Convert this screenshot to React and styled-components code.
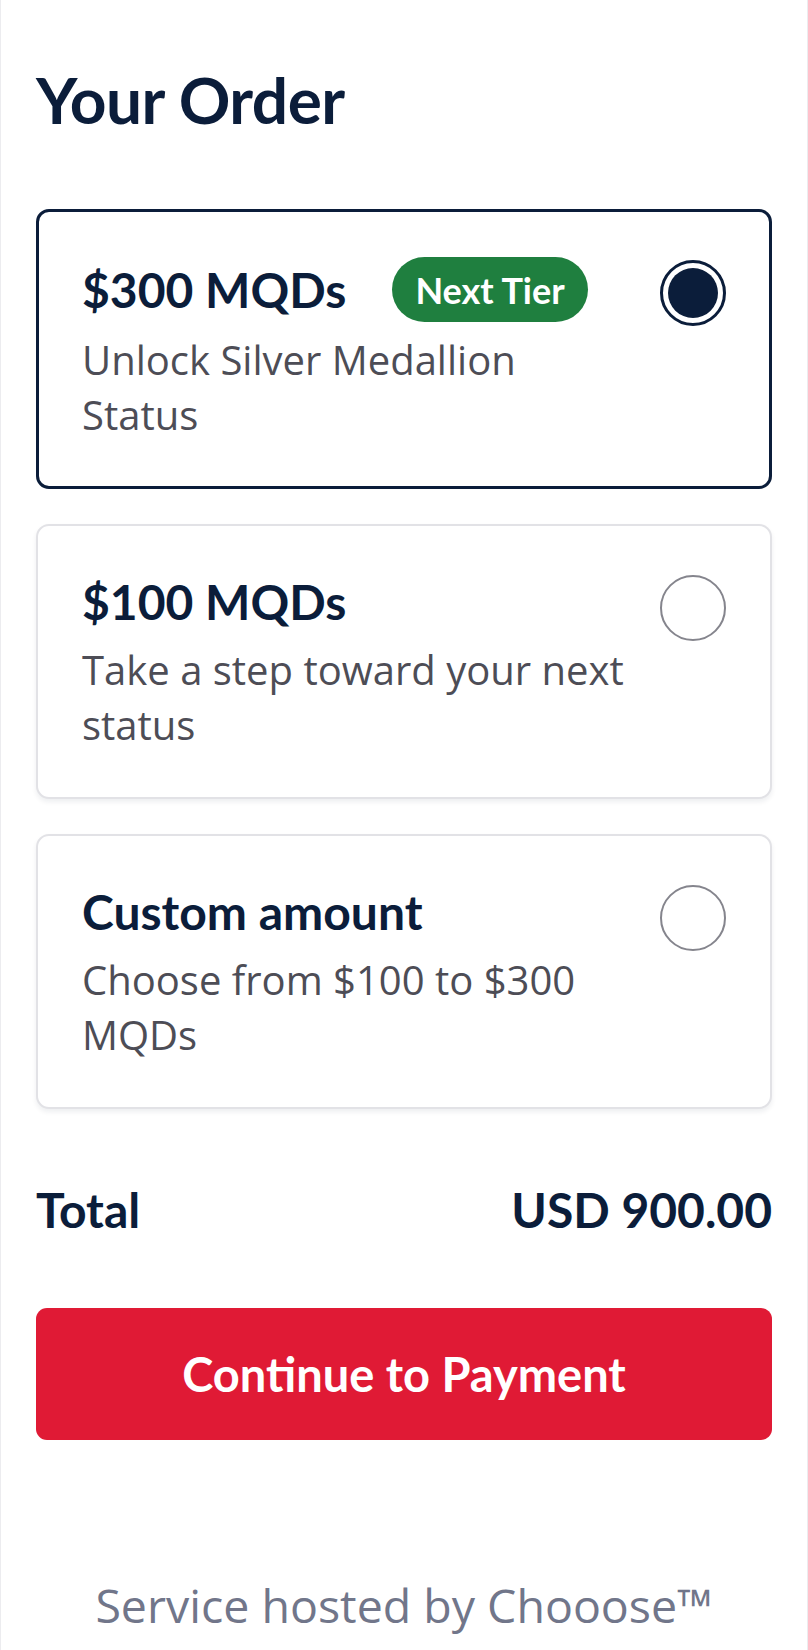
import React, { useState } from "react";
import styled, { createGlobalStyle } from "styled-components";

const GlobalStyle = createGlobalStyle`
  html, body {
    margin: 0;
    padding: 0;
    background: #ffffff;
  }
  * {
    box-sizing: border-box;
  }
`;

const Page = styled.div`
  width: 808px;
  min-height: 1650px;
  padding: 61px 35px 0;
  border-left: 1px solid #ececef;
  border-right: 1px solid #ececef;
  background: #ffffff;
  font-family: Lato, "Open Sans", sans-serif;
  color: #0b1d3a;
`;

const Heading = styled.h1`
  margin: 0 0 71px;
  font-size: 64px;
  line-height: 77px;
  font-weight: 700;
  letter-spacing: -0.5px;
`;

const OptionList = styled.div`
  display: flex;
  flex-direction: column;
  gap: 35px;
`;

const OptionCard = styled.div`
  display: flex;
  align-items: flex-start;
  gap: 32px;
  padding: ${(p) => (p.$selected ? "45px 43px 44px" : "46px 44px 45px")};
  border: ${(p) => (p.$selected ? "3px solid #0b1d3a" : "2px solid #e2e2e6")};
  border-radius: 13px;
  background: #ffffff;
  box-shadow: ${(p) =>
    p.$selected ? "none" : "0 3px 5px rgba(20, 30, 60, 0.07)"};
  cursor: pointer;
`;

const OptionText = styled.div`
  flex: 1;
  min-width: 0;
`;

const TitleRow = styled.div`
  display: flex;
  align-items: center;
  gap: 46px;
`;

const Title = styled.div`
  font-size: 48px;
  line-height: 60px;
  font-weight: 700;
  color: #0b1d3a;
`;

const Badge = styled.span`
  display: inline-flex;
  align-items: center;
  height: 65px;
  padding: 0 23px;
  border-radius: 33px;
  background: #1f7f3f;
  color: #ffffff;
  font-size: 36px;
  font-weight: 700;
`;

const Description = styled.p`
  margin: 10px 0 0;
  font-family: "Open Sans", sans-serif;
  font-size: 40px;
  line-height: 55px;
  font-weight: 400;
  color: #4d4d56;
`;

const Radio = styled.span`
  flex-shrink: 0;
  width: 66px;
  height: 66px;
  margin-top: 3px;
  border-radius: 50%;
  border: ${(p) => (p.$checked ? "3px solid #0b1d3a" : "2px solid #85858d")};
  background: #ffffff;
  display: flex;
  align-items: center;
  justify-content: center;

  &::after {
    content: "";
    display: ${(p) => (p.$checked ? "block" : "none")};
    width: 50px;
    height: 50px;
    border-radius: 50%;
    background: #0b1d3a;
  }
`;

const TotalRow = styled.div`
  display: flex;
  justify-content: space-between;
  align-items: baseline;
  margin-top: 72px;
  font-size: 48px;
  line-height: 58px;
  font-weight: 700;
  color: #0b1d3a;
`;

const PayButton = styled.button`
  display: block;
  width: 100%;
  height: 132px;
  margin-top: 69px;
  border: none;
  border-radius: 11px;
  background: #e01a35;
  color: #ffffff;
  font-family: Lato, "Open Sans", sans-serif;
  font-size: 47px;
  font-weight: 700;
  cursor: pointer;
`;

const Footer = styled.p`
  margin: 134px 0 0;
  text-align: center;
  font-family: "Open Sans", sans-serif;
  font-size: 46.5px;
  line-height: 62px;
  color: #71768a;
`;

const options = [
  {
    id: "300",
    title: "$300 MQDs",
    badge: "Next Tier",
    description: "Unlock Silver Medallion Status",
  },
  {
    id: "100",
    title: "$100 MQDs",
    description: "Take a step toward your next status",
  },
  {
    id: "custom",
    title: "Custom amount",
    description: "Choose from $100 to $300 MQDs",
  },
];

const App = () => {
  const [selected, setSelected] = useState("300");

  return (
    <>
      <GlobalStyle />
      <Page>
        <Heading>Your Order</Heading>
        <OptionList>
          {options.map((opt) => (
            <OptionCard
              key={opt.id}
              $selected={selected === opt.id}
              onClick={() => setSelected(opt.id)}
            >
              <OptionText>
                <TitleRow>
                  <Title>{opt.title}</Title>
                  {opt.badge && <Badge>{opt.badge}</Badge>}
                </TitleRow>
                <Description>{opt.description}</Description>
              </OptionText>
              <Radio $checked={selected === opt.id} />
            </OptionCard>
          ))}
        </OptionList>
        <TotalRow>
          <span>Total</span>
          <span>USD 900.00</span>
        </TotalRow>
        <PayButton>Continue to Payment</PayButton>
        <Footer>Service hosted by Chooose™</Footer>
      </Page>
    </>
  );
};

export default App;
